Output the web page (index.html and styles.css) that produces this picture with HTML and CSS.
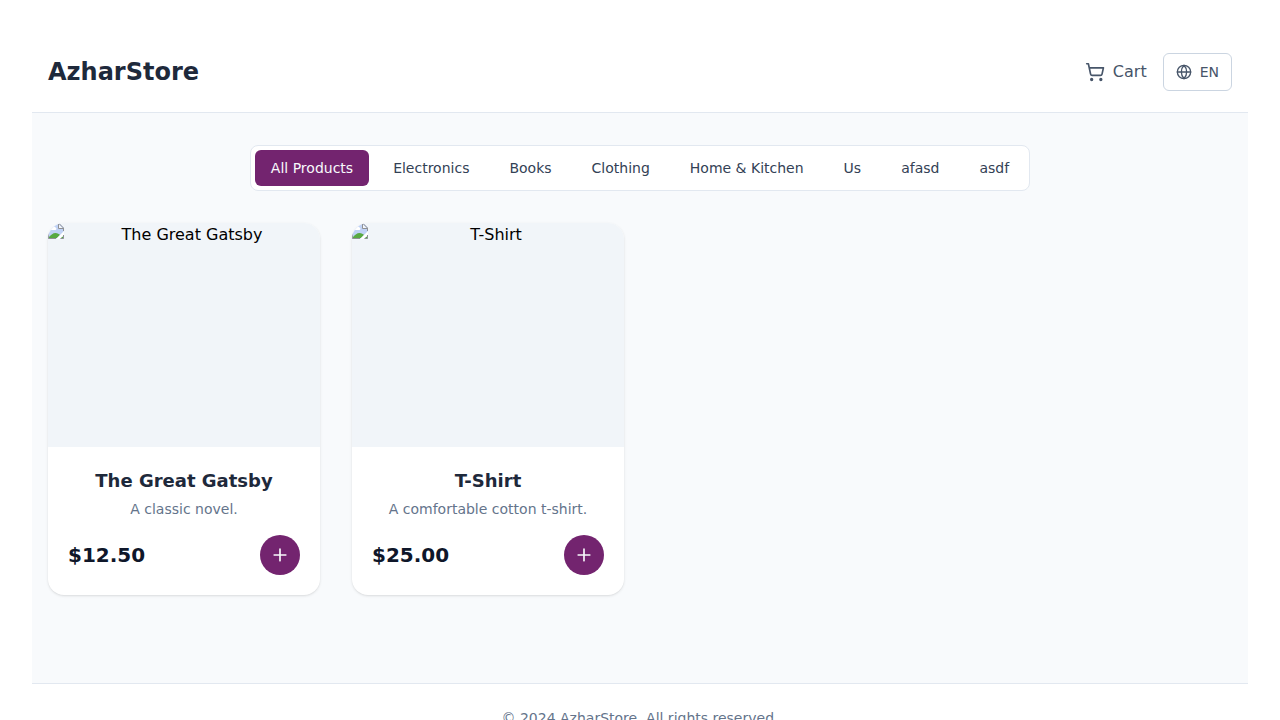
FILE: index.html
```html
<!DOCTYPE html>
<html lang="en">
<head>
<meta charset="utf-8">
<meta name="viewport" content="width=device-width, initial-scale=1">
<title>AzharStore</title>
<link rel="stylesheet" href="styles.css">
</head>
<body>
<svg class="sprite" aria-hidden="true">
  <symbol id="plus" viewBox="0 0 24 24"><path d="M5 12h14M12 5v14"/></symbol>
  <symbol id="missing" viewBox="0 0 16 16">
    <path fill="#c0d2f5" d="M0 0h11l5 5v11H0z"/>
    <path fill="#fff" d="M2 6a1.500 1.500 0 0 1 2-1.500 2 2 0 0 1 3.500 0A1.300 1.300 0 0 1 7.500 7H3z"/>
    <path fill="#58a942" d="M1 15v-1c2-2 4-4 6.500-4 2 0 3.500 1 4.500 2l-3 3z"/>
    <path fill="#58a942" d="M13 15v-2l2 1v1z"/>
    <path fill="#fff" d="M8 16 16 8v4l-4 4z"/>
    <path fill="#f4f6fa" d="M10.500 1v4.500H15z"/>
    <path fill="none" stroke="#8f9194" d="M0 .5h11l4.500 4.500v3M10.500 .5v5h5M.5 0v15.500H8M12.500 15.500h3V12"/>
  </symbol>
</svg>
<div class="store">
  <header class="header">
    <h1 class="brand">AzharStore</h1>
    <div class="actions">
      <a class="cart" href="#cart">
        <svg class="icon icon-md" viewBox="0 0 24 24" aria-hidden="true"><circle cx="8" cy="21" r="1"/><circle cx="19" cy="21" r="1"/><path d="M2.050 2.050h2l2.660 12.420a2 2 0 0 0 2 1.580h9.780a2 2 0 0 0 1.950-1.570l1.650-7.430H5.120"/></svg>
        <span>Cart</span>
      </a>
      <button class="language" type="button">
        <svg class="icon icon-sm" viewBox="0 0 24 24" aria-hidden="true"><circle cx="12" cy="12" r="10"/><path d="M12 2a14.500 14.500 0 0 0 0 20 14.500 14.500 0 0 0 0-20M2 12h20"/></svg>
        <span>EN</span>
      </button>
    </div>
  </header>
  <main class="main">
    <nav class="categories" aria-label="Product categories">
      <button class="category category-active" type="button">All Products</button>
      <button class="category" type="button">Electronics</button>
      <button class="category" type="button">Books</button>
      <button class="category" type="button">Clothing</button>
      <button class="category" type="button">Home &amp; Kitchen</button>
      <button class="category" type="button">Us</button>
      <button class="category" type="button">afasd</button>
      <button class="category" type="button">asdf</button>
    </nav>
    <div class="products">
      <article class="card">
        <div class="photo">
          <svg class="missing" aria-hidden="true"><use href="#missing"/></svg>
          <span class="alt">The Great Gatsby</span>
        </div>
        <div class="details">
          <h2 class="name">The Great Gatsby</h2>
          <p class="description">A classic novel.</p>
          <div class="purchase">
            <span class="price">$12.50</span>
            <button class="add" type="button" aria-label="Add The Great Gatsby to cart"><svg class="icon icon-md" aria-hidden="true"><use href="#plus"/></svg></button>
          </div>
        </div>
      </article>
      <article class="card">
        <div class="photo">
          <svg class="missing" aria-hidden="true"><use href="#missing"/></svg>
          <span class="alt">T-Shirt</span>
        </div>
        <div class="details">
          <h2 class="name">T-Shirt</h2>
          <p class="description">A comfortable cotton t-shirt.</p>
          <div class="purchase">
            <span class="price">$25.00</span>
            <button class="add" type="button" aria-label="Add T-Shirt to cart"><svg class="icon icon-md" aria-hidden="true"><use href="#plus"/></svg></button>
          </div>
        </div>
      </article>
    </div>
  </main>
  <footer class="footer">© 2024 AzharStore. All rights reserved.</footer>
</div>
</body>
</html>
```
FILE: styles.css
```css
* {
  box-sizing: border-box;
  margin: 0;
}

body {
  padding: 32px;
  background: #fff;
  color: #000;
  font: 16px/24px "DejaVu Sans", sans-serif;
}

button {
  font: inherit;
  cursor: pointer;
}

.sprite {
  display: none;
}

.icon {
  flex: none;
  fill: none;
  stroke: currentColor;
  stroke-width: 2;
  stroke-linecap: round;
  stroke-linejoin: round;
}

.icon-sm {
  width: 16px;
  height: 16px;
}

.icon-md {
  width: 20px;
  height: 20px;
}

.store {
  background: #f8fafc;
}

.header {
  display: flex;
  align-items: center;
  justify-content: space-between;
  padding: 21px 16px;
  border-bottom: 1px solid #e2e8f0;
  background: #fff;
}

.brand {
  color: #1e293b;
  font-size: 24px;
  line-height: 32px;
}

.actions {
  display: flex;
  align-items: center;
  gap: 16px;
}

.cart {
  display: flex;
  align-items: center;
  gap: 8px;
  color: #475569;
  text-decoration: none;
}

.language {
  display: flex;
  align-items: center;
  gap: 8px;
  padding: 8px 12px;
  border: 1px solid #cbd5e1;
  border-radius: 6px;
  background: #fff;
  color: #475569;
  font-size: 14px;
  line-height: 20px;
}

.main {
  display: flex;
  flex-direction: column;
  gap: 32px;
  padding: 32px 16px 88px;
}

.categories {
  display: flex;
  flex-wrap: wrap;
  align-self: center;
  gap: 8px;
  padding: 4px;
  border: 1px solid #e2e8f0;
  border-radius: 8px;
  background: #fff;
}

.category {
  padding: 8px 16px;
  border: 0;
  border-radius: 6px;
  background: transparent;
  color: #334155;
  font-size: 14px;
  line-height: 20px;
}

.category-active {
  background: #73246f;
  color: #f8fafc;
}

.products {
  display: grid;
  grid-template-columns: repeat(auto-fill, minmax(250px, 1fr));
  gap: 32px;
}

.card {
  overflow: hidden;
  border-radius: 16px;
  background: #fff;
  box-shadow: 0 1px 3px rgb(0 0 0 / 10%), 0 1px 2px -1px rgb(0 0 0 / 10%);
  text-align: center;
}

.photo {
  display: flex;
  align-items: flex-start;
  height: 224px;
  background: #f1f5f9;
}

.missing {
  width: 16px;
  height: 16px;
}

.alt {
  flex: 1;
}

.details {
  padding: 20px;
}

.name {
  margin-bottom: 4px;
  color: #1e293b;
  font-size: 18px;
  line-height: 28px;
}

.description {
  margin-bottom: 16px;
  color: #64748b;
  font-size: 14px;
  line-height: 20px;
}

.purchase {
  display: flex;
  align-items: center;
  justify-content: space-between;
}

.price {
  color: #0f172a;
  font-size: 20px;
  font-weight: 700;
  line-height: 28px;
}

.add {
  display: flex;
  align-items: center;
  justify-content: center;
  width: 40px;
  height: 40px;
  padding: 0;
  border: 0;
  border-radius: 50%;
  background: #73246f;
  color: #f8fafc;
}

.footer {
  padding: 24px 16px;
  border-top: 1px solid #e2e8f0;
  background: #fff;
  color: #64748b;
  font-size: 14px;
  line-height: 20px;
  text-align: center;
}
```
